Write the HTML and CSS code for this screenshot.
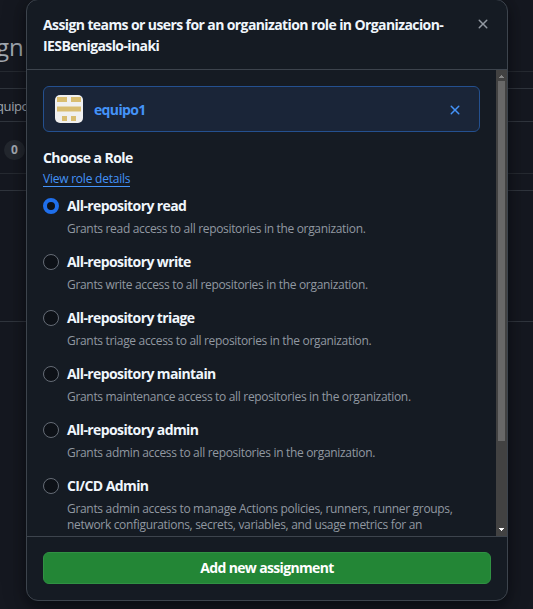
FILE: index.html
```html
<!DOCTYPE html>
<html lang="en">
<head>
<meta charset="utf-8">
<title>Assign organization role</title>
<link rel="stylesheet" href="styles.css">
</head>
<body>
<main class="page">
  <h1 class="page-title">gn</h1>
  <div class="page-search">quipo</div>
  <div class="page-count"><span class="counter">0</span></div>
  <div class="page-gap"></div>
  <div class="page-list"></div>
</main>
<section class="dialog" role="dialog" aria-modal="true">
  <header class="dialog-header">
    <h2 class="dialog-title">Assign teams or users for an organization role in Organizacion-<br>IESBenigaslo-inaki</h2>
    <svg class="close" width="16" height="16" viewBox="0 0 16 16"><path d="M3.72 3.72a.75.75 0 0 1 1.06 0L8 6.94l3.22-3.22a.75.75 0 1 1 1.06 1.06L9.06 8l3.22 3.22a.75.75 0 1 1-1.06 1.06L8 9.06l-3.22 3.22a.75.75 0 0 1-1.06-1.06L6.94 8 3.72 4.78a.75.75 0 0 1 0-1.06Z"/></svg>
  </header>
  <div class="dialog-body">
    <div class="content">
      <div class="token">
        <svg class="avatar" width="28" height="28" viewBox="0 0 28 28"><rect width="28" height="28" rx="5" fill="#f0f0f0"/><path fill="#d9bd70" d="M2 2h10v5H2zM16 2h10v5H16zM2 11.5h24v5H2zM7 21h5v5H7zM16 21h5v5h-5z"/></svg>
        <span class="token-name">equipo1</span>
        <svg class="remove" width="16" height="16" viewBox="0 0 16 16"><path d="M3.72 3.72a.75.75 0 0 1 1.06 0L8 6.94l3.22-3.22a.75.75 0 1 1 1.06 1.06L9.06 8l3.22 3.22a.75.75 0 1 1-1.06 1.06L8 9.06l-3.22 3.22a.75.75 0 0 1-1.06-1.06L6.94 8 3.72 4.78a.75.75 0 0 1 0-1.06Z"/></svg>
      </div>
      <h3 class="section-title">Choose a Role</h3>
      <div class="details"><a class="details-link">View role details</a></div>
      <div class="role"><i class="radio checked"></i><div><b class="role-name">All-repository read</b><p class="role-text">Grants read access to all repositories in the organization.</p></div></div>
      <div class="role"><i class="radio"></i><div><b class="role-name">All-repository write</b><p class="role-text">Grants write access to all repositories in the organization.</p></div></div>
      <div class="role"><i class="radio"></i><div><b class="role-name">All-repository triage</b><p class="role-text">Grants triage access to all repositories in the organization.</p></div></div>
      <div class="role"><i class="radio"></i><div><b class="role-name">All-repository maintain</b><p class="role-text">Grants maintenance access to all repositories in the organization.</p></div></div>
      <div class="role"><i class="radio"></i><div><b class="role-name">All-repository admin</b><p class="role-text">Grants admin access to all repositories in the organization.</p></div></div>
      <div class="role"><i class="radio"></i><div><b class="role-name">CI/CD Admin</b><p class="role-text">Grants admin access to manage Actions policies, runners, runner groups,<br>network configurations, secrets, variables, and usage metrics for an</p></div></div>
    </div>
    <div class="scrollbar">
      <svg class="arrow" width="11" height="11" viewBox="0 0 11 11"><path fill="#868686" d="M5 5h1v1h1v1h1v1H3V7h1V6h1z"/></svg>
      <div class="thumb"></div>
      <svg class="arrow" width="11" height="11" viewBox="0 0 11 11"><path fill="#fff" d="M3 3h5v1H7v1H6v1H5V5H4V4H3z"/></svg>
    </div>
  </div>
  <footer class="dialog-footer"><button class="submit">Add new assignment</button></footer>
</section>
</body>
</html>
```
FILE: styles.css
```css
* { box-sizing: border-box; }
body {
  margin: 0;
  height: 609px;
  overflow: hidden;
  position: relative;
  background: #151820;
  color: #f0f6fc;
  font-family: "Open Sans", "Noto Sans", sans-serif;
}
h1, h2, h3, p { margin: 0; }
.page { color: #a2a8b0; }
.page-title {
  height: 72px;
  padding-top: 31px;
  border-bottom: 1px solid #262a31;
  font-size: 24px;
  font-weight: 400;
  line-height: 32px;
  text-indent: -4px;
}
.page-search {
  height: 34px;
  margin-top: 16px;
  border: solid #30353d;
  border-width: 1px 0;
  font-size: 13px;
  line-height: 34px;
  letter-spacing: -.4px;
  text-indent: -4px;
}
.page-count {
  height: 52px;
  padding: 18px 0 0 4px;
  border-bottom: 1px solid #262a31;
}
.counter {
  display: block;
  width: 21px;
  height: 20px;
  border-radius: 10px;
  background: #23272e;
  font-size: 12px;
  font-weight: 700;
  line-height: 20px;
  text-align: center;
}
.page-gap { height: 16px; }
.page-list { height: 132px; border: solid #30353d; border-width: 1px 0; }

.dialog {
  position: absolute;
  top: -1px;
  left: 26px;
  width: 482px;
  height: 602px;
  display: flex;
  flex-direction: column;
  overflow: hidden;
  border: 1px solid #3d444d;
  border-radius: 12px;
  background: #151b23;
  box-shadow: 0 6px 12px rgba(1, 4, 9, .4), 0 0 24px rgba(1, 4, 9, .25);
}
.dialog-header {
  height: 70px;
  display: flex;
  justify-content: space-between;
  padding: 14px 16px 0;
  border-bottom: 1px solid #3d444d;
}
.dialog-title {
  font-size: 14px;
  font-weight: 700;
  line-height: 21px;
  letter-spacing: -.6px;
  white-space: nowrap;
}
.close { margin-top: 2px; fill: #9198a1; }
.dialog-body {
  height: 466px;
  display: flex;
  overflow: hidden;
}
.content {
  width: 469px;
  padding: 16px;
  overflow: hidden;
}
.token {
  width: 437px;
  height: 46px;
  display: flex;
  align-items: center;
  padding: 0 16px 0 11px;
  border: 1px solid #24508f;
  border-radius: 6px;
  background: #1a2538;
}
.token-name {
  flex: 1;
  margin-left: 11px;
  color: #4493f8;
  font-size: 14px;
  font-weight: 700;
  letter-spacing: -.65px;
}
.remove { fill: #4493f8; margin-top: 2px; }
.section-title {
  margin-top: 15px;
  font-size: 14px;
  font-weight: 700;
  line-height: 21px;
  letter-spacing: -.55px;
}
.details { height: 18px; margin: 1px 0 11px; line-height: 20px; font-size: 12px; }
.details-link {
  display: inline-block;
  height: 18px;
  border-bottom: 1px solid #4493f8;
  color: #4493f8;
  letter-spacing: -.23px;
}
.role { height: 56px; display: flex; gap: 8px; }
.radio {
  width: 16px;
  height: 16px;
  flex: none;
  border: 1px solid #656c76;
  border-radius: 50%;
  background: #0d1117;
}
.radio.checked { border: 4px solid #1f6feb; }
.role-name {
  display: block;
  font-size: 14px;
  font-weight: 700;
  line-height: 16px;
  letter-spacing: -.6px;
  white-space: nowrap;
}
.role-text {
  margin-top: 7px;
  color: #9198a1;
  font-size: 12px;
  line-height: 16px;
  letter-spacing: -.32px;
  white-space: nowrap;
}
.scrollbar {
  width: 11px;
  display: flex;
  flex-direction: column;
  align-items: center;
  background: #424242;
}
.arrow { flex: none; }
.thumb { width: 7px; height: 360px; margin-bottom: auto; background: #686868; }
.dialog-footer {
  flex: 1;
  padding: 15px 16px 0;
  border-top: 1px solid #3d444d;
}
.submit {
  display: block;
  width: 448px;
  height: 32px;
  border: 1px solid #309143;
  border-radius: 6px;
  background: #238636;
  color: #fff;
  font: 700 14px/20px "Open Sans", "Noto Sans", sans-serif;
  letter-spacing: -.66px;
}
```
